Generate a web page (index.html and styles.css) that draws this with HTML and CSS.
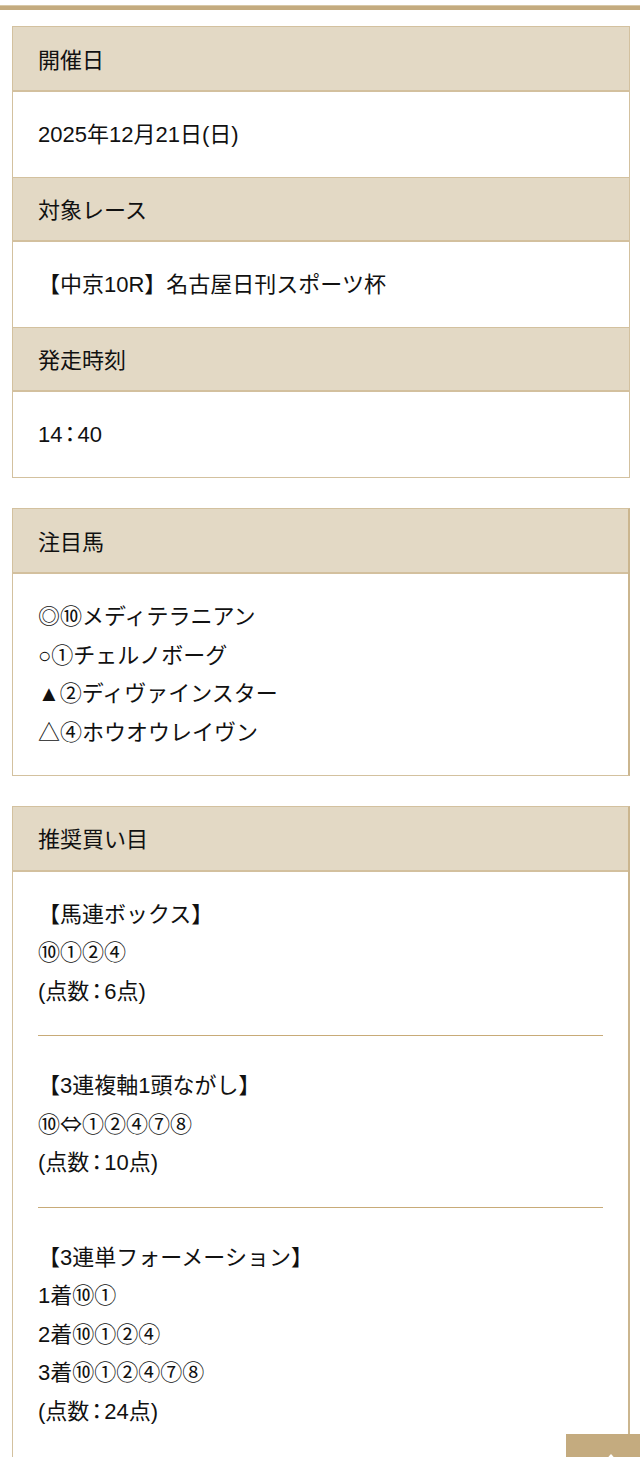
FILE: index.html
```html
<!DOCTYPE html>
<html lang="ja">
<head>
<meta charset="utf-8">
<link rel="stylesheet" href="styles.css">
</head>
<body>
<div class="topbar"></div>
<main class="page">
  <section class="box">
    <div class="head">開催日</div>
    <div class="body">2025年12月21日(日)</div>
    <div class="head">対象レース</div>
    <div class="body">【中京10R】名古屋日刊スポーツ杯</div>
    <div class="head">発走時刻</div>
    <div class="body">14<span class="colon">：</span>40</div>
  </section>

  <section class="box box-alt">
    <div class="head">注目馬</div>
    <div class="body">
      <p>◎⑩メディテラニアン</p>
      <p>○①チェルノボーグ</p>
      <p>▲②ディヴァインスター</p>
      <p>△④ホウオウレイヴン</p>
    </div>
  </section>

  <section class="box box-alt">
    <div class="head">推奨買い目</div>
    <div class="body body-last">
      <div class="block">
        <p>【馬連ボックス】</p>
        <p>⑩①②④</p>
        <p>(点数<span class="colon">：</span>6点)</p>
      </div>
      <div class="divider"></div>
      <div class="block">
        <p>【3連複軸1頭ながし】</p>
        <p>⑩<span class="sym">⇔</span>①②④⑦⑧</p>
        <p>(点数<span class="colon">：</span>10点)</p>
      </div>
      <div class="divider"></div>
      <div class="block">
        <p>【3連単フォーメーション】</p>
        <p>1着⑩①</p>
        <p>2着⑩①②④</p>
        <p>3着⑩①②④⑦⑧</p>
        <p>(点数<span class="colon">：</span>24点)</p>
      </div>
    </div>
  </section>
</main>
<a class="pagetop" href="#"><span class="arrow"></span></a>
</body>
</html>
```

FILE: styles.css
```css
* { box-sizing: border-box; }
html, body {
  margin: 0;
  padding: 0;
  background: #ffffff;
}
body {
  font-family: "Liberation Sans", "Noto Sans CJK JP", sans-serif;
  font-size: 22px;
  line-height: 38.5px;
  color: #111111;
}
.topbar {
  margin-top: 5px;
  height: 5px;
  background: #c4ab7f;
  border-top: 1px solid #d8c8a8;
}
.page {
  padding: 16px 10px 40px 12px;
  display: flex;
  flex-direction: column;
  gap: 30px;
}
.box {
  border: 1px solid #d3c19f;
  background: #ffffff;
}
.box-alt {
  border-right-width: 2px;
  border-right-color: #cbb68f;
}
.head {
  background: #e3d9c5;
  padding: 13.5px 25px 10px;
  border-top: 1px solid #d3c19f;
  border-bottom: 2px solid #d3c09e;
}
.head:first-child {
  border-top: 0;
  padding-top: 14.5px;
}
.body {
  padding: 24px 25px 22.5px;
}
.body-last {
  padding-bottom: 40px;
}
.body p { margin: 0; }
.colon {
  font-family: "Noto Sans CJK JP", sans-serif;
  font-feature-settings: "palt";
  margin: 0 2px;
  line-height: 0;
}
.sym {
  font-family: "Noto Sans CJK JP", sans-serif;
  line-height: 0;
}
.divider {
  height: 1px;
  background: #c8ab78;
  margin: 24px 0 31px;
}
.pagetop {
  position: fixed;
  right: 0;
  bottom: 0;
  width: 74px;
  height: 23px;
  background: #c4ab7f;
  display: block;
}
.pagetop .arrow {
  position: absolute;
  left: 41px;
  bottom: -7px;
  width: 8px;
  height: 8px;
  border-top: 2px solid #ffffff;
  border-left: 2px solid #ffffff;
  transform: rotate(45deg);
}
```
